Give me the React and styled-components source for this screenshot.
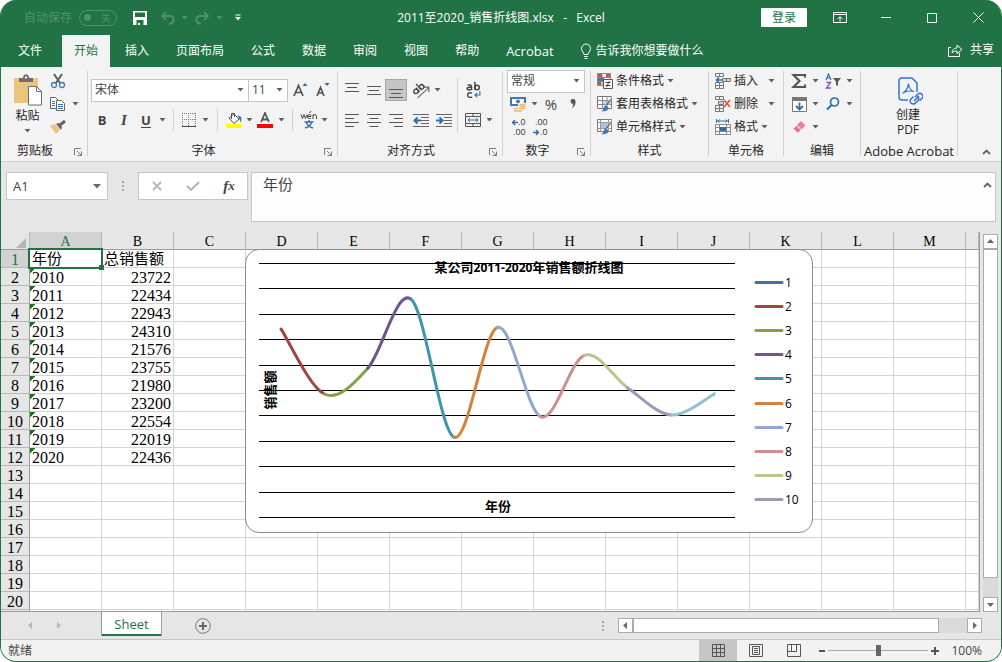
import React from 'react'
import styled, { ThemeProvider, createGlobalStyle, css } from 'styled-components'

const theme = {
    green: '#217346',
    greenFaded: '#4f916c',
    ribbon: '#f3f3f3',
    chrome: '#e6e6e6',
    border: '#c6c6c6',
    line: '#d4d4d4',
    edge: '#9b9b9b',
    text: '#262626',
    icon: '#5f5f5f',
    blue: '#2f6ea8',
}

const GlobalStyle = createGlobalStyle`
    *, *::before, *::after {
        box-sizing: border-box;
    }

    body {
        margin: 0;
        background: #fff;
        color: #262626;
        font: 12px/16px "Open Sans", "Noto Sans CJK SC", sans-serif;
    }

    button, input, select, textarea {
        margin: 0;
        padding: 0;
        border: 0;
        border-radius: 0;
        background: none;
        color: inherit;
        font: inherit;
        outline: 0;
    }
`

/* ---------- window ---------- */

const Window = styled.div`
    display: flex;
    flex-direction: column;
    height: 100vh;
    overflow: hidden;
    border: 1px solid ${props => props.theme.green};
    border-top: 0;
    border-radius: 16px;
    background: ${props => props.theme.chrome};
`

const TitleBar = styled.header`
    display: grid;
    grid-template-columns: 1fr auto 1fr;
    align-items: center;
    flex: none;
    height: 35px;
    background: ${props => props.theme.green};
    color: #fff;
`

const QuickAccess = styled.div`
    display: flex;
    align-items: center;
    padding-left: 23px;
`

const AutoSave = styled.label`
    display: flex;
    align-items: center;
    gap: 7px;
    margin-right: 9px;
    color: ${props => props.theme.greenFaded};
`

const Switch = styled.span`
    display: flex;
    align-items: center;
    justify-content: space-between;
    width: 38px;
    height: 16px;
    padding: 0 5px 0 4px;
    border: 1px solid ${props => props.theme.greenFaded};
    border-radius: 8px;
    font-size: 10px;
    line-height: 14px;

    input {
        appearance: none;
        width: 7px;
        height: 7px;
        border-radius: 50%;
        background: ${props => props.theme.greenFaded};
    }
`

const IconButton = styled.button`
    display: flex;
    align-items: center;
    justify-content: center;
    flex: none;
    width: ${props => props.$w || 22}px;
    height: ${props => props.$h || 22}px;
    color: ${props => (props.$faded ? props.theme.greenFaded : 'inherit')};

    svg {
        flex: none;
    }

    ${props =>
        props.$active &&
        css`
            background: #c5c5c5;
            border: 1px solid #a6a6a6;
        `}
`

const DocTitle = styled.h1`
    margin: 0;
    font-size: 12px;
    line-height: 16px;
    font-weight: 400;
    white-space: pre;
`

const WindowControls = styled.div`
    display: flex;
    align-items: center;
    justify-content: flex-end;
`

const SignIn = styled.button`
    width: 46px;
    height: 19px;
    margin-right: 10px;
    border-radius: 1px;
    background: #fff;
    color: ${props => props.theme.green};
`

/* ---------- ribbon tabs ---------- */

const TabBar = styled.nav`
    display: flex;
    flex: none;
    gap: 3px;
    height: 32px;
    padding: 0 7px 0 5px;
    background: ${props => props.theme.green};
    color: #fff;
`

const Tab = styled.button`
    height: 32px;
    padding: 0 12px;
    font-size: ${props => (props.$latin ? 13 : 12)}px;

    &:first-child {
        margin-right: 5px;
    }

    ${props =>
        props.$active &&
        css`
            background: ${props.theme.ribbon};
            color: ${props.theme.green};
        `}
`

const TellMe = styled.label`
    display: flex;
    align-items: center;
    flex: 1;
    gap: 4px;
    margin-left: 11px;

    input {
        flex: 1;
        min-width: 0;
    }

    input::placeholder {
        color: #fff;
        opacity: 1;
    }
`

const Share = styled.button`
    display: flex;
    align-items: center;
    gap: 7px;
    padding-bottom: 3px;
`

/* ---------- ribbon ---------- */

const Ribbon = styled.section`
    display: flex;
    flex: none;
    height: 95px;
    padding: 4px 0 5px;
    border-bottom: 1px solid #d0d0d0;
    background: ${props => props.theme.ribbon};
`

const Group = styled.section`
    display: flex;
    flex-direction: column;
    flex: none;
    width: ${props => props.$w}px;
    border-right: 1px solid #d0d0d0;
`

const GroupBody = styled.div`
    display: flex;
    flex: 1;
    padding-left: ${props => props.$pad || 0}px;
`

const GroupFooter = styled.footer`
    display: grid;
    grid-template-columns: ${props => (props.$launcher ? '1fr 18px' : '1fr')};
    align-items: end;
    height: 12px;
    font-size: ${props => (props.$latin ? 13 : 12)}px;
    line-height: 10px;
    text-align: center;
    white-space: nowrap;

    h2 {
        margin: 0;
        font: inherit;
    }
`

const Stack = styled.div`
    display: flex;
    flex-direction: column;
    gap: 3px;
`

const TwoRows = styled.div`
    display: flex;
    flex-direction: column;
    gap: 7px;
    padding-top: 8px;
`

const Row = styled.div`
    display: flex;
    align-items: center;
    height: ${props => props.$h || 20}px;
`

const Divider = styled.span`
    width: 1px;
    height: 22px;
    margin: 0 5px;
    background: #d0d0d0;
`

const TallDivider = styled(Divider)`
    height: 54px;
    margin: 7px 4px 0;
`

const BigButton = styled.button`
    display: flex;
    flex-direction: column;
    align-items: center;
    width: ${props => props.$w}px;
    padding-top: ${props => props.$top || 0}px;
    line-height: 15px;

    svg:first-child {
        margin-bottom: 2px;
    }
`

const TextButton = styled.button`
    display: flex;
    align-items: center;
    gap: 3px;
    width: ${props => (props.$w ? `${props.$w}px` : 'auto')};
    height: 20px;
    white-space: nowrap;

    svg:last-child {
        margin-left: ${props => (props.$w ? 'auto' : 0)};
    }
`

const Glyph = styled.span`
    color: #444;
    font-size: ${props => props.$size || 13}px;
    font-weight: ${props => (props.$bold ? 700 : 400)};
    font-style: ${props => (props.$italic ? 'italic' : 'normal')};
    font-family: ${props => (props.$serif ? '"Liberation Serif", serif' : 'inherit')};
    text-decoration: ${props => (props.$underline ? 'underline' : 'none')};
    text-underline-offset: 2px;
`

const SelectBox = styled.label`
    display: grid;
    align-items: center;
    width: ${props => props.$w}px;
    height: 23px;
    border: 1px solid ${props => props.theme.border};
    background: #fff;

    & + & {
        margin-left: -1px;
    }

    select {
        grid-area: 1 / 1;
        appearance: none;
        height: 21px;
        padding-left: 3px;
        color: #444;
    }

    svg {
        grid-area: 1 / 1;
        justify-self: end;
        margin-right: 4px;
        pointer-events: none;
    }
`

/* ---------- formula bar ---------- */

const FormulaBar = styled.section`
    display: flex;
    align-items: flex-start;
    flex: none;
    height: 70px;
    padding: 10px 5px;
`

const NameBox = styled.div`
    display: flex;
    align-items: center;
    width: 102px;
    height: 28px;
    border: 1px solid ${props => props.theme.border};
    background: #fff;
    color: #444;

    input {
        flex: 1;
        min-width: 0;
        padding-left: 6px;
        font-size: 13px;
    }
`

const Grip = styled.div`
    display: flex;
    align-items: center;
    justify-content: center;
    width: 30px;
    height: 28px;
`

const FormulaTools = styled.div`
    display: flex;
    align-items: center;
    justify-content: space-around;
    width: 110px;
    height: 28px;
    margin-right: 3px;
    border: 1px solid ${props => props.theme.border};
    background: #fff;
`

const FormulaField = styled.div`
    display: flex;
    flex: 1;
    height: 50px;
    border: 1px solid ${props => props.theme.border};
    background: #fdfdfd;

    textarea {
        flex: 1;
        padding: 1px 11px;
        resize: none;
        color: #444;
        font-size: 15px;
        line-height: 20px;
    }
`

/* ---------- sheet ---------- */

const Workspace = styled.main`
    display: flex;
    flex: 1;
    min-height: 0;
`

const Sheet = styled.div`
    position: relative;
    flex: 1;
    min-width: 0;
    overflow: hidden;
    border-right: 1px solid ${props => props.theme.edge};
    border-bottom: 1px solid ${props => props.theme.edge};
    background: #fff;
`

const Grid = styled.table`
    width: 100%;
    height: 100%;
    table-layout: fixed;
    border-spacing: 0;
    font: 16px/15px "Liberation Serif", "Noto Sans CJK SC", serif;
    color: #000;
`

const HeadCell = styled.th`
    height: 18px;
    padding: 3px 0 0;
    border-right: 1px solid #b8b8b8;
    border-bottom: 1px solid ${props => props.theme.edge};
    background: ${props => (props.$active ? '#d2d2d2' : props.theme.chrome)};
    color: ${props => (props.$active ? props.theme.green : '#000')};
    font-size: 14px;
    line-height: 14px;
    font-weight: 400;
`

const RowHead = styled.th`
    padding: 2px 0 0;
    border-right: 1px solid ${props => props.theme.edge};
    border-bottom: 1px solid #b8b8b8;
    background: ${props => (props.$active ? '#d2d2d2' : props.theme.chrome)};
    color: ${props => (props.$active ? props.theme.green : '#000')};
    font-weight: 400;
`

const Corner = styled(HeadCell)`
    padding: 0 3px 0 0;

    svg {
        display: block;
        margin: 4px 0 0 auto;
    }
`

const DataRow = styled.tr`
    height: 18px;
`

const Cell = styled.td`
    position: relative;
    padding: 2px 2px 0;
    border-right: 1px solid ${props => props.theme.line};
    border-bottom: 1px solid ${props => props.theme.line};
    text-align: ${props => (props.$number ? 'right' : 'left')};
    white-space: nowrap;
    ${props =>
        props.$flag &&
        css`
            background: linear-gradient(135deg, #0f7b0f 4px, transparent 4px);
        `}
    ${props =>
        props.$heading &&
        css`
            font-size: 15px;
        `}
    ${props =>
        props.$selected &&
        css`
            &::before {
                content: '';
                position: absolute;
                inset: -2px;
                z-index: 1;
                border: 2px solid ${props.theme.green};
            }

            &::after {
                content: '';
                position: absolute;
                right: -3px;
                bottom: -3px;
                z-index: 2;
                width: 5px;
                height: 5px;
                background: ${props.theme.green};
            }
        `}
`

const ChartFrame = styled.figure`
    position: absolute;
    top: 17px;
    left: 244px;
    width: 568px;
    height: 284px;
    margin: 0;
    border: 1px solid #8c8c8c;
    border-radius: 14px;
    background: #fff;

    svg {
        display: block;
    }

    text {
        font-family: "Open Sans", "Noto Sans CJK SC", sans-serif;
    }
`

const VerticalScroll = styled.div`
    display: flex;
    flex-direction: column;
    width: 21px;
    padding: 2px 3px 0;
`

const HorizontalScroll = styled.div`
    display: flex;
    width: 364px;
    height: 15px;
    margin-right: 19px;
`

const ScrollButton = styled.button`
    display: flex;
    align-items: center;
    justify-content: center;
    flex: none;
    width: 15px;
    height: 15px;
    border: 1px solid #ababab;
    background: #fff;
    color: #666;
`

const Thumb = styled.span`
    flex: 1;
    border: 1px solid #ababab;
    background: #fff;
`

const Track = styled.span`
    flex: none;
    width: ${props => props.$w || 15}px;
    height: ${props => props.$h || 15}px;
    background: #dadada;
`

/* ---------- bottom bars ---------- */

const SheetTabs = styled.nav`
    display: flex;
    align-items: center;
    flex: none;
    height: 28px;
    border-bottom: 1px solid ${props => props.theme.border};
`

const SheetNav = styled.div`
    display: flex;
    gap: 6px;
    width: 100px;
    padding-left: 18px;
    color: #b5b5b5;
`

const SheetTab = styled.button`
    align-self: flex-start;
    width: 61px;
    height: 24px;
    margin-right: 30px;
    border: solid ${props => props.theme.edge};
    border-width: 0 1px;
    box-shadow: inset 0 -2px ${props => props.theme.green};
    background: #fff;
    color: ${props => props.theme.green};
    font-size: 13px;
`

const Spacer = styled.span`
    flex: 1;
`

const StatusBar = styled.footer`
    display: flex;
    align-items: center;
    flex: none;
    height: 21px;
    padding: 0 19px 0 7px;
    background: #f2f2f2;
    color: #444;
`

const ViewButton = styled.button`
    display: flex;
    align-items: center;
    justify-content: center;
    width: 38px;
    height: 21px;
    background: ${props => (props.$active ? '#c6c6c6' : 'transparent')};
`

const Zoom = styled.div`
    display: flex;
    align-items: center;
    margin-left: 3px;

    input {
        appearance: none;
        width: 100px;
        height: 11px;
        background: linear-gradient(#a8a8a8, #a8a8a8) center / 100% 1px no-repeat;
    }

    input::-webkit-slider-thumb {
        appearance: none;
        width: 5px;
        height: 11px;
        background: #666;
    }

    output {
        margin-left: 9px;
    }
`

/* ---------- icons ---------- */

const Icon = ({ w = 16, h = w, box, children }) => (
    <svg
        width={w}
        height={h}
        viewBox={box || `0 0 ${w} ${h}`}
        fill="none"
        stroke="currentColor"
        aria-hidden="true"
    >
        {children}
    </svg>
)

const Caret = ({ color = '#5f5f5f' }) => (
    <Icon w={7} h={4}>
        <path d="M.5 0h6L3.500 3.500z" fill={color} stroke="none" />
    </Icon>
)

const CaretButton = ({ label, w = 11, faded }) => (
    <IconButton type="button" aria-label={label} $w={w}>
        <Caret color={faded ? '#4f916c' : undefined} />
    </IconButton>
)

const Arrow = ({ dir }) => {
    const paths = {
        up: 'M1 6l3.500-4L8 6z',
        down: 'M1 3l3.500 4L8 3z',
        left: 'M6 1L2 4.500 6 8z',
        right: 'M3 1l4 3.500L3 8z',
    }
    return (
        <Icon w={9}>
            <path d={paths[dir]} fill="currentColor" stroke="none" />
        </Icon>
    )
}

const SaveIcon = () => (
    <Icon w={14}>
        <path fill="#fff" stroke="none" fillRule="evenodd" d="M0 0h14v14H0zM2 1.500v4.500h10V1.500zM3.500 9v5h1.500v-2h2v2h3.500V9z" />
    </Icon>
)

const UndoIcon = () => (
    <Icon>
        <path d="M6 2L2 6l4 4M2.500 6H10c5 0 5 7-1 8" strokeWidth="2" />
    </Icon>
)

const RedoIcon = () => (
    <Icon>
        <path d="M10 2l4 4-4 4M13.500 6H6c-5 0-5 7 1 8" strokeWidth="2" />
    </Icon>
)

const CustomizeIcon = () => (
    <Icon w={8} h={7}>
        <path d="M1.500 1h5" />
        <path d="M1 3h6L4 6.500z" fill="currentColor" stroke="none" />
    </Icon>
)

const BulbIcon = () => (
    <Icon w={12} h={16}>
        <path d="M4 11.500c0-2-2.500-3-2.500-6a4.500 4.500 0 0 1 9 0c0 3-2.500 4-2.500 6zM4 13.500h4M4.500 15.500h3" />
    </Icon>
)

const ShareIcon = () => (
    <Icon w={16} h={14}>
        <path d="M4 4.500H1.500v9h11V10M5 10c.5-4 2.500-5 5-5V2l5 4.500-5 4.200V8c-2 0-3.500.3-5 2z" />
    </Icon>
)

const RibbonOptionsIcon = () => (
    <Icon w={14} h={12}>
        <path d="M.5.5h13v10H.5zM.5 2.500h13M7 9.500V5M4.800 6.800L7 4.600l2.200 2.200" />
    </Icon>
)

const PasteIcon = () => (
    <Icon w={30} h={32}>
        <path d="M1 4h24v25H1z" fill="#ecc57c" stroke="none" />
        <path d="M6 8V4h4c0-5 6-5 6 0h4v4z" fill="#6d6d6d" stroke="none" />
        <path d="M12 3.500h2" stroke="#fff" strokeWidth="2" />
        <path d="M15.500 12.500h8l5 5v13.500h-13z" fill="#fff" stroke="#6d6d6d" />
        <path d="M23.500 12.500v5h5" stroke="#6d6d6d" />
    </Icon>
)

const CutIcon = () => (
    <Icon>
        <path d="M4 1l6 9M12 1l-6 9" stroke="#5f5f5f" strokeWidth="2" />
        <circle cx="4" cy="12" r="2.500" stroke="#3f78b5" strokeWidth="1.300" />
        <circle cx="12" cy="12" r="2.500" stroke="#3f78b5" strokeWidth="1.300" />
    </Icon>
)

const CopyIcon = () => (
    <Icon>
        <path d="M.5 1.500h5l3 3v8h-8z" fill="#fff" stroke="#666" />
        <path d="M2 5.500h3M2 7.500h3M2 9.500h3" stroke="#3f78b5" />
        <path d="M6.500 4.500h5l3 3v7h-8z" fill="#fff" stroke="#666" />
        <path d="M8 8.500h5M8 10.500h5M8 12.500h5" stroke="#3f78b5" />
    </Icon>
)

const BrushIcon = () => (
    <Icon>
        <path d="M0 7l5-2 5 6-4 4z" fill="#ecc57c" stroke="none" />
        <path d="M6 5l3-1 3 4-1 3z" fill="#666" stroke="none" />
        <path d="M10 6l5-4" stroke="#666" strokeWidth="3" />
    </Icon>
)

const LauncherIcon = () => (
    <Icon w={8}>
        <path d="M.5 7V.5H7M3 3l4 4M7.500 3.500v4h-4" stroke="#7a7a7a" />
    </Icon>
)

const GrowFontIcon = ({ shrink }) => (
    <Icon>
        <path
            d={shrink ? 'M2 14L5.500 5.500l3.500 8.500M3.500 11h4.500' : 'M1 14L5.500 3.500 10 14M2.500 10.500h6'}
            stroke="#555"
            strokeWidth="1.700"
        />
        <path d={shrink ? 'M9.500 1h5L12 4z' : 'M9.500 4h5L12 1z'} fill="#2f6ea8" stroke="none" />
    </Icon>
)

const BordersIcon = () => (
    <Icon w={14}>
        <path d="M.5 0v13M6.500 0v13M13.500 0v13M0 .5h14M0 6.500h14" stroke="#777" strokeDasharray="1 1" />
        <path d="M0 13.500h14" stroke="#444" />
    </Icon>
)

const FillIcon = () => (
    <Icon w={17} h={16}>
        <path d="M3 6l5-4 5 5-5 4.500z" fill="#fff" stroke="#555" />
        <path d="M5.500 7V1.500h3V5" stroke="#555" />
        <path d="M11.500 3.500c4 0 5 3 3 7C13.500 8 13.500 6.500 11.500 3.500z" fill="#3f78b5" stroke="none" />
        <path d="M0 12h16v4H0z" fill="#ff0" stroke="none" />
    </Icon>
)

const FontColorIcon = () => (
    <Icon>
        <path d="M4 10L8 1l4 9M5.500 7.500h5" stroke="#555" strokeWidth="1.800" />
        <path d="M0 12h16v4H0z" fill="#f00" stroke="none" />
    </Icon>
)

const linesByKind = {
    top: 'M1 1.500h14M3 5.500h10M1 9.500h14',
    middle: 'M1 4.500h14M3 8.500h10M1 12.500h14',
    bottom: 'M1 7.500h14M3 11.500h10M1 15.500h14',
    left: 'M1 2.500h14M1 6.500h9M1 10.500h14M1 14.500h9',
    center: 'M1 2.500h14M3.500 6.500h9M1 10.500h14M3.500 14.500h9',
    right: 'M1 2.500h14M6 6.500h9M1 10.500h14M6 14.500h9',
}

const LinesIcon = ({ kind }) => (
    <Icon>
        <path d={linesByKind[kind]} stroke="#555" />
    </Icon>
)

const IndentIcon = ({ out }) => (
    <Icon>
        <path d="M0 2.500h16M8 5.500h8M8 8.500h8M8 11.500h8M0 14.500h16" stroke="#666" />
        <path
            d={out ? 'M8 8.500H1.500M4.500 5.500l-3 3 3 3' : 'M0 8.500h6.500M3.500 5.500l3 3-3 3'}
            stroke="#2f6ea8"
            strokeWidth="2"
        />
    </Icon>
)

const OrientationIcon = () => (
    <Icon w={18} h={17} box="0 1 16 15">
        <path d="M5 15L15 6M15 10V5.500h-4.500" stroke="#666" />
        <g transform="rotate(-42 5 8)" stroke="#444" strokeWidth="1.200">
            <circle cx="3" cy="8" r="2" />
            <path d="M5.200 5.500V10.500M7.500 3v7.500" />
            <circle cx="9.500" cy="8.300" r="2" />
        </g>
    </Icon>
)

const WrapIcon = () => (
    <Icon w={15} h={18} box="0 0 13.500 16">
        <g stroke="#444" strokeWidth="1.300">
            <path d="M1.500 3.500h2q1.500 0 1.500 1.500v3M5 5.500H3q-2 0-2 1.200T3 8q2 0 2-1.500M8 .5V8" />
            <circle cx="10" cy="5.800" r="2" />
            <path d="M5.500 10.800q-4-1-4 1.700t4 2" />
        </g>
        <path d="M12.500 9v3.500H8M10 10.500l-2 2 2 2" stroke="#2f6ea8" />
    </Icon>
)

const MergeIcon = () => (
    <Icon>
        <path d="M.5 1.500h15v13H.5zM.5 4.500h15M.5 11.500h15M8 1.500v3M8 11.500v3" stroke="#555" />
        <path d="M3 8h10M5 6L3 8l2 2M11 6l2 2-2 2" stroke="#2f6ea8" />
    </Icon>
)

const PhoneticIcon = () => (
    <Icon w={18} h={18}>
        <g stroke="#444">
            <path d="M1 3.500l1.500 4 1.500-4 1.500 4 1.500-4M7.500 5.500h3.500q0-2-1.700-2T7.500 5.500t1.800 2h1.500M9.500 2l1.500-2M13 8V3.500M13 5q.5-1.500 2-1.500t1.500 2V8" />
        </g>
        <g stroke="#2f6ea8" strokeWidth="1.300">
            <path d="M9 9v2M4.500 11h9M6.500 11.500q1 4 6.500 5.500M11.500 11.500q-1 4-6.500 5.500" />
        </g>
    </Icon>
)

const CurrencyIcon = () => (
    <Icon>
        <path d="M0 1h16v9H0z" fill="#3f78b5" stroke="none" />
        <path d="M2 3h12v5H2z" fill="#fff" stroke="none" />
        <circle cx="8" cy="5.500" r="2" fill="#3f78b5" stroke="none" />
        <path d="M8 7h8v9H3v-5h5z" fill="#f3f3f3" stroke="none" />
        <path d="M9.500 8.500h6M9.500 10.500h6M9 12.500h6M4 12.500h4M4 15h8" stroke="#eeb56d" strokeWidth="1.500" />
    </Icon>
)

const DecimalLabel = styled.span`
    display: grid;
    justify-items: end;
    width: 15px;
    color: #444;
    font-family: "Liberation Sans", sans-serif;
    font-size: 9px;
    line-height: 10px;

    span {
        display: flex;
        align-items: center;
    }
`

const SmallArrow = ({ left }) => (
    <Icon w={7}>
        <path d={left ? 'M7 3.500H1.500M4 1L1.500 3.500 4 6' : 'M0 3.500h5.500M3 1l2.500 2.500L3 6'} stroke="#2f6ea8" strokeWidth="1.400" />
    </Icon>
)

const ConditionalIcon = () => (
    <Icon>
        <path d="M.5.500h13v12H.5zM.5 4.500h13M.5 8.500h13M5 .5v12" fill="#fff" stroke="#888" />
        <path d="M1 1h4v3H1zM9 1h4v3H9zM1 9h3v3H1z" fill="#c8563a" stroke="none" />
        <path d="M1 5h6v3H1z" fill="#3f78b5" stroke="none" />
        <path d="M6.500 6.500h9v9h-9z" fill="#fff" stroke="#555" />
        <path d="M8.500 9.500h5M8.500 12.500h5M12.500 8l-3 6" stroke="#444" />
    </Icon>
)

const TableStyleIcon = () => (
    <Icon>
        <path d="M.5.500h14v12H.5z" fill="#fff" stroke="#777" />
        <path d="M5 4h9v5H5z" fill="#c3d6e8" stroke="none" />
        <path d="M.5 4.500h14M.5 8.500h14M5.500.5v12M10 .5v12" stroke="#888" />
        <path d="M15.500 2l-5 8-2-1.500L15 1z" fill="#666" stroke="#f3f3f3" strokeWidth=".5" />
        <path d="M8.500 9l3 2.500c0 4-5 4-7.500 3.500 3 0 2-4 4.500-6z" fill="#3f78b5" stroke="none" />
    </Icon>
)

const CellStyleIcon = () => (
    <Icon>
        <path d="M.5.500h14v12H.5z" fill="#fff" stroke="#777" />
        <path d="M4 4h7v5H4z" fill="#a9c5df" stroke="none" />
        <path d="M.5 3.500h14M3.500.5v12M11.500.5v12M.5 9.500h14" stroke="#999" />
        <path d="M15.500 2l-5 8-2-1.500L15 1z" fill="#666" stroke="#f3f3f3" strokeWidth=".5" />
        <path d="M8.500 9l3 2.500c0 4-5 4-7.500 3.500 3 0 2-4 4.500-6z" fill="#3f78b5" stroke="none" />
    </Icon>
)

const InsertCellsIcon = () => (
    <Icon>
        <path d="M.5.5h4v3h-4zM4.500.5h4v3h-4zM.5 9.500h4v3h-4zM4.500 9.500h4v3h-4zM.5 12.500h4v3h-4zM4.500 12.500h4v3h-4z" stroke="#777" />
        <path d="M7.500 5.500h8v3h-8zM11.500 5.500v3" fill="#c3d6e8" stroke="#777" />
        <path d="M7 7H1.500M4 4.500L1.500 7 4 9.500" stroke="#2f6ea8" strokeWidth="1.600" />
    </Icon>
)

const DeleteCellsIcon = () => (
    <Icon>
        <path d="M.5.5h4v3h-4zM4.500.5h4v3h-4zM.5 9.500h4v3h-4zM4.500 9.500h4v3h-4zM.5 12.500h4v3h-4zM4.500 12.500h4v3h-4z" stroke="#777" />
        <path d="M3.500 5.500h5v3h-5z" fill="#c3d6e8" stroke="#777" />
        <path d="M9 4l6 7M15 4l-6 7" stroke="#d9573a" strokeWidth="1.700" />
    </Icon>
)

const FormatCellsIcon = () => (
    <Icon>
        <path d="M.5 5.500h15v10H.5zM.5 8.500h15M.5 12.500h15M4.500 5.500v10M11.500 5.500v10" fill="#fff" stroke="#888" />
        <path d="M5 8h6v4H5z" fill="#2f6ea8" stroke="none" />
        <path d="M1.500 0v4M13.500 0v4M2 2h11M4.500.5L3 2l1.500 1.500M10.500.5L12 2l-1.500 1.500" stroke="#2f6ea8" />
    </Icon>
)

const SigmaIcon = () => (
    <Icon>
        <path d="M14 4.500V2H2.500L8.500 8l-6 6H14v-2.500" stroke="#555" strokeWidth="2.200" />
    </Icon>
)

const SortIcon = () => (
    <Icon>
        <path d="M1 7l2.500-6L6 7M2 5h3" stroke="#2f6ea8" strokeWidth="1.200" />
        <path d="M1.500 9.500h4L1.500 15h4.500" stroke="#8a4fb0" strokeWidth="1.300" />
        <path d="M8 5h8l-3 3.500V13l-2-1V8.500z" fill="#555" stroke="none" />
    </Icon>
)

const FillDownIcon = () => (
    <Icon w={15}>
        <path d="M.5.500h14v14H.5z" fill="#fff" stroke="#777" />
        <path d="M0 0h15v4H0z" fill="#777" stroke="none" />
        <path d="M7.500 5.500v7M4 9l3.500 3.500L11 9" stroke="#2f6ea8" strokeWidth="1.800" />
    </Icon>
)

const FindIcon = () => (
    <Icon w={14}>
        <circle cx="8.500" cy="5" r="4" stroke="#2f6ea8" strokeWidth="1.700" />
        <path d="M5.500 8L1 12.500" stroke="#2f6ea8" strokeWidth="2.200" />
    </Icon>
)

const EraserIcon = () => (
    <Icon w={14}>
        <path d="M9 1l4.500 4.500-4 4L5 5z" fill="#ea8296" stroke="none" />
        <path d="M4.500 5.500l4.500 4.500-3 3L1 9z" fill="#e9788e" stroke="#f3f3f3" strokeWidth=".6" />
    </Icon>
)

const PdfIcon = () => (
    <Icon w={30} h={28} box="-5 0 30 28">
        <g stroke="#3572d8" strokeWidth="1.500" strokeLinejoin="round">
            <path d="M10 23H4q-3 0-3-3V4q0-3 3-3h10l5 5v9" />
            <path d="M5 16q4-2 5.500-9 1 6 5 7.500Q10 13 5 16z" strokeWidth="1.200" />
            <path d="M17 20l3-3q2-1.500 4 .3t0 4l-2.500 2.500" />
            <path d="M19 19.500q2.300.8 1.500 3.500L17 26.500q-2 1.300-4-.5t0-4l2.500-2.500M16 24l5-5" />
        </g>
    </Icon>
)

const ChevronUp = () => (
    <Icon w={9} h={6}>
        <path d="M1 5l3.500-3.500L8 5" stroke="#666" strokeWidth="1.800" />
    </Icon>
)

const DotsIcon = () => (
    <Icon w={2} h={10}>
        <path d="M0 1h2M0 5h2M0 9h2" stroke="#a8a8a8" strokeWidth="2" />
    </Icon>
)

/* ---------- ribbon content ---------- */

const Footer = ({ title, launcher, latin }) => (
    <GroupFooter $latin={latin} $launcher={launcher}>
        <h2>{title}</h2>
        {launcher && (
            <IconButton type="button" aria-label={`${title}设置`} $w={18} $h={8}>
                <LauncherIcon />
            </IconButton>
        )}
    </GroupFooter>
)

const Select = ({ label, value, w }) => (
    <SelectBox $w={w}>
        <select aria-label={label} defaultValue={value}>
            <option>{value}</option>
        </select>
        <Caret />
    </SelectBox>
)

const ClipboardGroup = () => (
    <Group $w={87}>
        <GroupBody $pad={11}>
            <BigButton type="button" $w={31} $top={3}>
                <PasteIcon />
                粘贴
                <Icon w={7} h={14}>
                    <path d="M.5 6h6L3.500 9.500z" fill="#5f5f5f" stroke="none" />
                </Icon>
            </BigButton>
            <Stack>
                <Row>
                    <IconButton type="button" aria-label="剪切" $w={30}><CutIcon /></IconButton>
                </Row>
                <Row>
                    <IconButton type="button" aria-label="复制" $w={30}><CopyIcon /></IconButton>
                    <CaretButton label="复制选项" w={5} />
                </Row>
                <Row>
                    <IconButton type="button" aria-label="格式刷" $w={30}><BrushIcon /></IconButton>
                </Row>
            </Stack>
        </GroupBody>
        <Footer title="剪贴板" launcher />
    </Group>
)

const FontGroup = () => (
    <Group $w={250}>
        <GroupBody $pad={3}>
            <TwoRows>
                <Row $h={22}>
                    <Select label="字体" value="宋体" w={158} />
                    <Select label="字号" value="11" w={40} />
                    <IconButton type="button" aria-label="增大字号" $w={26}><GrowFontIcon /></IconButton>
                    <IconButton type="button" aria-label="减小字号" $w={18}><GrowFontIcon shrink /></IconButton>
                </Row>
                <Row $h={24}>
                    <IconButton type="button" aria-label="加粗"><Glyph $bold>B</Glyph></IconButton>
                    <IconButton type="button" aria-label="倾斜"><Glyph $italic $bold $serif $size={15}>I</Glyph></IconButton>
                    <IconButton type="button" aria-label="下划线"><Glyph $bold $underline>U</Glyph></IconButton>
                    <CaretButton label="下划线选项" />
                    <Divider />
                    <IconButton type="button" aria-label="边框" $w={20}><BordersIcon /></IconButton>
                    <CaretButton label="边框选项" w={13} />
                    <Divider />
                    <IconButton type="button" aria-label="填充颜色"><FillIcon /></IconButton>
                    <CaretButton label="填充颜色选项" w={9} />
                    <IconButton type="button" aria-label="字体颜色"><FontColorIcon /></IconButton>
                    <CaretButton label="字体颜色选项" />
                    <Divider />
                    <IconButton type="button" aria-label="拼音"><PhoneticIcon /></IconButton>
                    <CaretButton label="拼音选项" w={9} />
                </Row>
            </TwoRows>
        </GroupBody>
        <Footer title="字体" launcher />
    </Group>
)

const AlignGroup = () => (
    <Group $w={165}>
        <GroupBody $pad={3}>
            <TwoRows>
                <Row $h={22}>
                    <IconButton type="button" aria-label="顶端对齐"><LinesIcon kind="top" /></IconButton>
                    <IconButton type="button" aria-label="垂直居中"><LinesIcon kind="middle" /></IconButton>
                    <IconButton type="button" aria-label="底端对齐" $active><LinesIcon kind="bottom" /></IconButton>
                    <IconButton type="button" aria-label="方向" $w={28}><OrientationIcon /></IconButton>
                    <CaretButton label="方向选项" w={5} />
                </Row>
                <Row $h={24}>
                    <IconButton type="button" aria-label="左对齐"><LinesIcon kind="left" /></IconButton>
                    <IconButton type="button" aria-label="居中"><LinesIcon kind="center" /></IconButton>
                    <IconButton type="button" aria-label="右对齐"><LinesIcon kind="right" /></IconButton>
                    <IconButton type="button" aria-label="减少缩进量" $w={28}><IndentIcon out /></IconButton>
                    <IconButton type="button" aria-label="增加缩进量" $w={18}><IndentIcon /></IconButton>
                </Row>
            </TwoRows>
            <TallDivider />
            <TwoRows>
                <Row $h={22}>
                    <IconButton type="button" aria-label="自动换行"><WrapIcon /></IconButton>
                </Row>
                <Row $h={24}>
                    <IconButton type="button" aria-label="合并后居中"><MergeIcon /></IconButton>
                    <CaretButton label="合并选项" />
                </Row>
            </TwoRows>
        </GroupBody>
        <Footer title="对齐方式" launcher />
    </Group>
)

const NumberGroup = () => (
    <Group $w={88}>
        <GroupBody $pad={4}>
            <Stack>
                <Row>
                    <Select label="数字格式" value="常规" w={78} />
                </Row>
                <Row>
                    <IconButton type="button" aria-label="会计数字格式"><CurrencyIcon /></IconButton>
                    <CaretButton label="会计格式选项" />
                    <IconButton type="button" aria-label="百分比样式"><Glyph $size={15}>%</Glyph></IconButton>
                    <IconButton type="button" aria-label="千位分隔样式">
                        <Icon w={6} h={10}>
                            <path d="M.5 2a2 2 0 1 1 5 1Q5.500 7 2 9 3.500 6 3 5 .5 4.500.5 2z" fill="#555" stroke="none" />
                        </Icon>
                    </IconButton>
                </Row>
                <Row>
                    <IconButton type="button" aria-label="增加小数位数">
                        <DecimalLabel>
                            <span><SmallArrow left />.0</span>
                            <span>.00</span>
                        </DecimalLabel>
                    </IconButton>
                    <IconButton type="button" aria-label="减少小数位数">
                        <DecimalLabel>
                            <span>.00</span>
                            <span><SmallArrow />.0</span>
                        </DecimalLabel>
                    </IconButton>
                </Row>
            </Stack>
        </GroupBody>
        <Footer title="数字" launcher />
    </Group>
)

const StylesGroup = () => (
    <Group $w={118}>
        <GroupBody $pad={6}>
            <Stack>
                <TextButton type="button"><ConditionalIcon />条件格式<Caret /></TextButton>
                <TextButton type="button"><TableStyleIcon />套用表格格式<Caret /></TextButton>
                <TextButton type="button"><CellStyleIcon />单元格样式<Caret /></TextButton>
            </Stack>
        </GroupBody>
        <Footer title="样式" />
    </Group>
)

const CellsGroup = () => (
    <Group $w={75}>
        <GroupBody $pad={6}>
            <Stack>
                <TextButton type="button" $w={60}><InsertCellsIcon />插入<Caret /></TextButton>
                <TextButton type="button" $w={60}><DeleteCellsIcon />删除<Caret /></TextButton>
                <TextButton type="button"><FormatCellsIcon />格式<Caret /></TextButton>
            </Stack>
        </GroupBody>
        <Footer title="单元格" />
    </Group>
)

const EditGroup = () => (
    <Group $w={77}>
        <GroupBody $pad={4}>
            <Stack>
                <Row>
                    <IconButton type="button" aria-label="自动求和"><SigmaIcon /></IconButton>
                    <CaretButton label="求和选项" w={11} />
                    <IconButton type="button" aria-label="排序和筛选" $w={24}><SortIcon /></IconButton>
                    <CaretButton label="排序选项" w={9} />
                </Row>
                <Row>
                    <IconButton type="button" aria-label="填充"><FillDownIcon /></IconButton>
                    <CaretButton label="填充选项" w={11} />
                    <IconButton type="button" aria-label="查找和选择" $w={24}><FindIcon /></IconButton>
                    <CaretButton label="查找选项" w={9} />
                </Row>
                <Row>
                    <IconButton type="button" aria-label="清除"><EraserIcon /></IconButton>
                    <CaretButton label="清除选项" w={11} />
                </Row>
            </Stack>
        </GroupBody>
        <Footer title="编辑" />
    </Group>
)

const AcrobatGroup = () => (
    <Group $w={97}>
        <GroupBody>
            <BigButton type="button" $w={94} $top={6}>
                <PdfIcon />
                <span>创建</span>
                <span>PDF</span>
            </BigButton>
        </GroupBody>
        <Footer title="Adobe Acrobat" latin />
    </Group>
)

const Collapse = styled.div`
    display: flex;
    align-items: flex-end;
    justify-content: flex-end;
    flex: 1;
    padding-right: 9px;
`

/* ---------- sheet content ---------- */

const records = [
    ['2010', 23722],
    ['2011', 22434],
    ['2012', 22943],
    ['2013', 24310],
    ['2014', 21576],
    ['2015', 23755],
    ['2016', 21980],
    ['2017', 23200],
    ['2018', 22554],
    ['2019', 22019],
    ['2020', 22436],
]

const columns = 'ABCDEFGHIJKLM'.split('')
const rowNumbers = Array.from({ length: 20 }, (_, i) => i + 1)

const cellProps = (row, col) => {
    if (row === 1 && col === 'A') return { $heading: true, $selected: true, children: '年份' }
    if (row === 1 && col === 'B') return { $heading: true, children: '总销售额' }
    const record = records[row - 2]
    if (record && col === 'A') return { $flag: true, children: record[0] }
    if (record && col === 'B') return { $number: true, children: record[1] }
    return {}
}

const seriesColors = [
    '#466ea6', '#a14542', '#86a249', '#6b568d', '#3f95a9', '#d5813c',
    '#8fa6cd', '#ce8e90', '#b6c890', '#a197b9', '#90c2d2',
]

const points = records.map(([, value], i) => [
    35 + i * 43.35,
    144 - (value - 22434) * 0.0505,
])

// bezier between two neighbouring points, tangents taken from the points around them
const segmentPath = i => {
    const p0 = points[i - 1] || points[i]
    const p1 = points[i]
    const p2 = points[i + 1]
    const p3 = points[i + 2] || p2
    const c1 = [p1[0] + (p2[0] - p0[0]) / 6, p1[1] + (p2[1] - p0[1]) / 6]
    const c2 = [p2[0] - (p3[0] - p1[0]) / 6, p2[1] - (p3[1] - p1[1]) / 6]
    return `M${p1} C${c1} ${c2} ${p2}`
}

const Chart = () => (
    <ChartFrame>
        <svg width="566" height="282" viewBox="0 0 566 282" role="img" aria-label="销售额折线图">
            {Array.from({ length: 11 }, (_, i) => (
                <path key={i} d={`M13 ${Math.round(i * 25.4) + 13.5}h476`} stroke="#000" />
            ))}
            {points.slice(0, -1).map((p, i) => (
                <path
                    key={i}
                    d={segmentPath(i)}
                    fill="none"
                    stroke={seriesColors[i + 1]}
                    strokeWidth="3"
                    strokeLinecap="round"
                />
            ))}
            <text x="283" y="22" fontSize="13" fontWeight="700" textAnchor="middle">
                某公司<tspan fontSize="12">2011-2020</tspan>年销售额折线图
            </text>
            <text x="252" y="261" fontSize="13" fontWeight="700" textAnchor="middle">年份</text>
            <text transform="translate(29 140) rotate(-90)" fontSize="13" fontWeight="700" textAnchor="middle">
                销售额
            </text>
            {seriesColors.slice(0, 10).map((color, i) => (
                <g key={color}>
                    <path
                        d={`M510 ${Math.round(i * 24.1) + 32.5}h26`}
                        stroke={color}
                        strokeWidth="3"
                        strokeLinecap="round"
                    />
                    <text x="539" y={Math.round(i * 24.1) + 37} fontSize="12">{i + 1}</text>
                </g>
            ))}
        </svg>
    </ChartFrame>
)

const SheetGrid = () => (
    <Grid>
        <colgroup>
            <col style={{ width: 29 }} />
            {columns.map(col => (
                <col key={col} style={{ width: 72 }} />
            ))}
            <col />
        </colgroup>
        <thead>
            <DataRow>
                <Corner>
                    <Icon w={10}>
                        <path d="M10 0v10H0z" fill="#b4b4b4" stroke="none" />
                    </Icon>
                </Corner>
                {columns.map(col => (
                    <HeadCell key={col} $active={col === 'A'}>{col}</HeadCell>
                ))}
                <HeadCell />
            </DataRow>
        </thead>
        <tbody>
            {rowNumbers.map(row => (
                <DataRow key={row}>
                    <RowHead $active={row === 1}>{row}</RowHead>
                    {columns.map(col => (
                        <Cell key={col} {...cellProps(row, col)} />
                    ))}
                    <Cell />
                </DataRow>
            ))}
            <tr>
                <RowHead />
                {columns.map(col => (
                    <Cell key={col} />
                ))}
                <Cell />
            </tr>
        </tbody>
    </Grid>
)

const tabs = ['文件', '开始', '插入', '页面布局', '公式', '数据', '审阅', '视图', '帮助', 'Acrobat']

const App = () => (
    <ThemeProvider theme={theme}>
        <GlobalStyle />
        <Window>
            <TitleBar>
                <QuickAccess>
                    <AutoSave>
                        自动保存
                        <Switch>
                            <input type="checkbox" />
                            关
                        </Switch>
                    </AutoSave>
                    <IconButton type="button" aria-label="保存" $w={28}><SaveIcon /></IconButton>
                    <IconButton type="button" aria-label="撤消" $w={28} $faded><UndoIcon /></IconButton>
                    <CaretButton label="撤消选项" w={5} faded />
                    <IconButton type="button" aria-label="恢复" $w={30} $faded><RedoIcon /></IconButton>
                    <CaretButton label="恢复选项" w={5} faded />
                    <IconButton type="button" aria-label="自定义快速访问工具栏" $w={32}><CustomizeIcon /></IconButton>
                </QuickAccess>
                <DocTitle>{'2011至2020_销售折线图.xlsx   -   Excel'}</DocTitle>
                <WindowControls>
                    <SignIn type="button">登录</SignIn>
                    <IconButton type="button" aria-label="功能区显示选项" $w={46}><RibbonOptionsIcon /></IconButton>
                    <IconButton type="button" aria-label="最小化" $w={46}>
                        <Icon w={10}><path d="M0 4.500h10" /></Icon>
                    </IconButton>
                    <IconButton type="button" aria-label="最大化" $w={46}>
                        <Icon w={10}><path d="M.5.5h9v9h-9z" /></Icon>
                    </IconButton>
                    <IconButton type="button" aria-label="关闭" $w={46}>
                        <Icon w={11}><path d="M.5.5l10 10M10.500.5l-10 10" /></Icon>
                    </IconButton>
                </WindowControls>
            </TitleBar>

            <TabBar>
                {tabs.map(tab => (
                    <Tab key={tab} type="button" $active={tab === '开始'} $latin={tab === 'Acrobat'}>
                        {tab}
                    </Tab>
                ))}
                <TellMe>
                    <BulbIcon />
                    <input type="text" aria-label="操作说明搜索" placeholder="告诉我你想要做什么" />
                </TellMe>
                <Share type="button"><ShareIcon />共享</Share>
            </TabBar>

            <Ribbon>
                <ClipboardGroup />
                <FontGroup />
                <AlignGroup />
                <NumberGroup />
                <StylesGroup />
                <CellsGroup />
                <EditGroup />
                <AcrobatGroup />
                <Collapse>
                    <IconButton type="button" aria-label="折叠功能区" $w={11} $h={9}><ChevronUp /></IconButton>
                </Collapse>
            </Ribbon>

            <FormulaBar>
                <NameBox>
                    <input type="text" aria-label="名称框" defaultValue="A1" />
                    <IconButton type="button" aria-label="名称列表" $w={20}>
                        <Icon w={8} h={5}><path d="M0 0h8L4 4.500z" fill="#666" stroke="none" /></Icon>
                    </IconButton>
                </NameBox>
                <Grip><DotsIcon /></Grip>
                <FormulaTools>
                    <IconButton type="button" aria-label="取消">
                        <Icon w={10}><path d="M1 1l8 8M9 1L1 9" stroke="#b5b5b5" strokeWidth="1.800" /></Icon>
                    </IconButton>
                    <IconButton type="button" aria-label="输入">
                        <Icon w={14} h={10}><path d="M1 5l4 4 8-8" stroke="#b5b5b5" strokeWidth="2" /></Icon>
                    </IconButton>
                    <IconButton type="button" aria-label="插入函数">
                        <Glyph $italic $serif $bold $size={15}>f</Glyph>
                        <Glyph $italic $serif $bold $size={13}>x</Glyph>
                    </IconButton>
                </FormulaTools>
                <FormulaField>
                    <textarea aria-label="编辑栏" defaultValue="年份" />
                    <IconButton type="button" aria-label="折叠编辑栏" $w={15} $h={24}><ChevronUp /></IconButton>
                </FormulaField>
            </FormulaBar>

            <Workspace>
                <Sheet>
                    <SheetGrid />
                    <Chart />
                </Sheet>
                <VerticalScroll>
                    <ScrollButton type="button" aria-label="向上滚动"><Arrow dir="up" /></ScrollButton>
                    <Thumb />
                    <Track $h={19} />
                    <ScrollButton type="button" aria-label="向下滚动"><Arrow dir="down" /></ScrollButton>
                </VerticalScroll>
            </Workspace>

            <SheetTabs>
                <SheetNav>
                    <IconButton type="button" aria-label="上一个工作表"><Arrow dir="left" /></IconButton>
                    <IconButton type="button" aria-label="下一个工作表"><Arrow dir="right" /></IconButton>
                </SheetNav>
                <SheetTab type="button">Sheet</SheetTab>
                <IconButton type="button" aria-label="新工作表">
                    <Icon>
                        <circle cx="8" cy="8" r="7.300" stroke="#777" />
                        <path d="M8 4v8M4 8h8" stroke="#666" strokeWidth="2" />
                    </Icon>
                </IconButton>
                <Spacer />
                <Grip><DotsIcon /></Grip>
                <HorizontalScroll>
                    <ScrollButton type="button" aria-label="向左滚动"><Arrow dir="left" /></ScrollButton>
                    <Thumb />
                    <Track $w={28} />
                    <ScrollButton type="button" aria-label="向右滚动"><Arrow dir="right" /></ScrollButton>
                </HorizontalScroll>
            </SheetTabs>

            <StatusBar>
                就绪
                <Spacer />
                <ViewButton type="button" aria-label="普通" $active>
                    <Icon w={13}><path d="M.5.5h12v12H.5zM.5 4.500h12M.5 8.500h12M4.500.5v12M8.500.5v12" stroke="#555" /></Icon>
                </ViewButton>
                <ViewButton type="button" aria-label="页面布局">
                    <Icon w={14} h={13}><path d="M.5.5h13v12H.5zM3.500 2.500h7v8h-7zM5 4.500h4M5 6.500h4M5 8.500h4" stroke="#555" /></Icon>
                </ViewButton>
                <ViewButton type="button" aria-label="分页预览">
                    <Icon w={14} h={13}><path d="M.5.5h13v12H.5zM4.500.5v7h-4M4.500 7.500h5v-7" stroke="#555" /></Icon>
                </ViewButton>
                <Zoom>
                    <IconButton type="button" aria-label="缩小" $w={12} $h={20}>
                        <Icon w={6}><path d="M0 3h6" stroke="#555" strokeWidth="2" /></Icon>
                    </IconButton>
                    <input type="range" min="0" max="100" defaultValue="50" aria-label="显示比例" />
                    <IconButton type="button" aria-label="放大" $w={14} $h={20}>
                        <Icon w={8}><path d="M0 4h8M4 0v8" stroke="#555" strokeWidth="2" /></Icon>
                    </IconButton>
                    <output>100%</output>
                </Zoom>
            </StatusBar>
        </Window>
    </ThemeProvider>
)

export default App
